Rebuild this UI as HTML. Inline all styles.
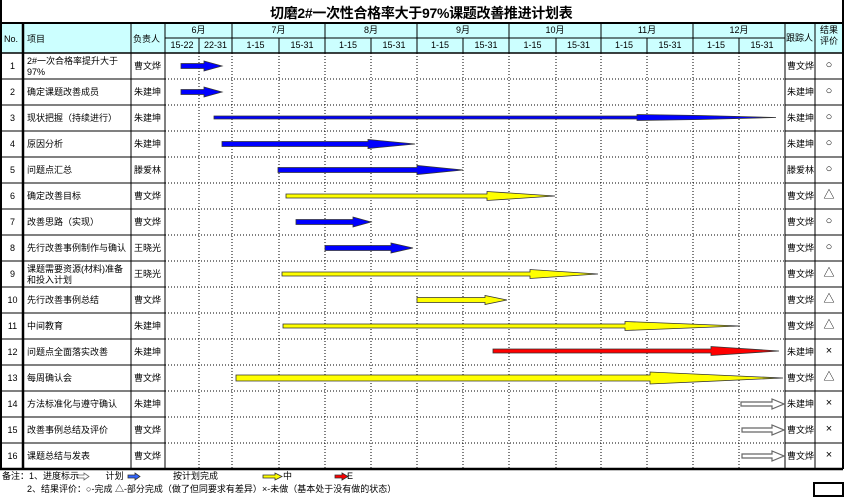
<!DOCTYPE html>
<html><head><meta charset="utf-8"><style>
body{margin:0;background:#fff;width:846px;height:497px;overflow:hidden;position:relative;font-family:"Liberation Sans","Noto Sans CJK SC",sans-serif;}
.t{position:absolute;font-size:9px;line-height:11px;color:#000;white-space:nowrap;}
.c{text-align:center;}
.m{font-size:11px;}
svg{position:absolute;left:0;top:0}
</style></head><body>
<svg width="846" height="497" viewBox="0 0 846 497">
<rect x="2" y="23" width="841" height="30" fill="#ccffff"/>
<g stroke="#000" fill="none">
<line x1="1" y1="0" x2="1" y2="469" stroke-width="2"/>
<line x1="2" y1="23" x2="843" y2="23" stroke-width="2"/>
<line x1="843" y1="0" x2="843" y2="469" stroke-width="2"/>
<line x1="165" y1="38" x2="785" y2="38"/>
<line x1="2" y1="53" x2="843" y2="53" stroke-width="1.5"/>
<line x1="23" y1="23" x2="23" y2="469" stroke-width="2.5"/>
<line x1="131" y1="23" x2="131" y2="469"/>
<line x1="165" y1="23" x2="165" y2="469"/>
<line x1="785" y1="23" x2="785" y2="469"/>
<line x1="815" y1="23" x2="815" y2="469"/>
<path d="M232 23V53M325 23V53M417 23V53M509 23V53M601 23V53M693 23V53M199 38V53M279 38V53M371 38V53M463 38V53M556 38V53M647 38V53M739 38V53"/>
<path stroke-dasharray="1,2" d="M199 53V469M232 53V469M279 53V469M325 53V469M371 53V469M417 53V469M463 53V469M509 53V469M556 53V469M601 53V469M647 53V469M693 53V469M739 53V469
M165 79H785M165 105H785M165 131H785M165 157H785M165 183H785M165 209H785M165 235H785M165 261H785M165 287H785M165 313H785M165 339H785M165 365H785M165 391H785M165 417H785M165 443H785"/>
<path d="M2 79H165M2 105H165M2 131H165M2 157H165M2 183H165M2 209H165M2 235H165M2 261H165M2 287H165M2 313H165M2 339H165M2 365H165M2 391H165M2 417H165M2 443H165
M785 79H843M785 105H843M785 131H843M785 157H843M785 183H843M785 209H843M785 235H843M785 261H843M785 287H843M785 313H843M785 339H843M785 365H843M785 391H843M785 417H843M785 443H843"/>
<line x1="0" y1="469" x2="843" y2="469" stroke-width="2.5"/>
<rect x="814" y="483" width="29" height="13" stroke-width="2"/>
</g>
<g stroke="#333" stroke-width="0.8">
<polygon fill="#0000ff" points="181,63.5 204,63.5 204,61 222,66 204,71 204,68.5 181,68.5"/>
<polygon fill="#0000ff" points="181,89.5 204,89.5 204,87 222,92 204,97 204,94.5 181,94.5"/>
<polygon fill="#0000ff" points="214,116 637,116 637,114.5 700,115.5 776,117.5 700,119.5 637,120.5 637,119 214,119"/>
<polygon fill="#0000ff" points="222,141.5 368,141.5 368,139.5 415,144 368,148.5 368,146.5 222,146.5"/>
<polygon fill="#0000ff" points="278,167.5 417,167.5 417,165.5 463,170 417,174.5 417,172.5 278,172.5"/>
<polygon fill="#ffff00" points="286,194 487,194 487,191.5 555,196 487,200.5 487,198 286,198"/>
<polygon fill="#0000ff" points="296,219.5 353,219.5 353,217 371,222 353,227 353,224.5 296,224.5"/>
<polygon fill="#0000ff" points="325,245.5 391,245.5 391,243 413,248 391,253 391,250.5 325,250.5"/>
<polygon fill="#ffff00" points="282,272 530,272 530,269.5 598,274 530,278.5 530,276 282,276"/>
<polygon fill="#ffff00" points="417,297.5 485,297.5 485,295.5 507,300 485,304.5 485,302.5 417,302.5"/>
<polygon fill="#ffff00" points="283,324 625,324 625,321.5 740,326 625,330.5 625,328 283,328"/>
<polygon fill="#ff0000" points="493,349 711,349 711,346.5 779,351 711,355.5 711,353 493,353"/>
<polygon fill="#ffff00" points="236,375 650,375 650,372 783,378 650,384 650,381 236,381"/>
<polygon fill="#fff" stroke="#666" stroke-width="1.2" points="741,402 772,402 772,399 784,404 772,409 772,406 741,406"/>
<polygon fill="#fff" stroke="#666" stroke-width="1.2" points="742,428 772,428 772,425 784,430 772,435 772,432 742,432"/>
<polygon fill="#fff" stroke="#666" stroke-width="1.2" points="742,454 772,454 772,451 784,456 772,461 772,458 742,458"/>
<polygon fill="#fff" stroke="#666" points="77,475 84,475 84,473 89,476.5 84,480 84,478 77,478"/>
<polygon fill="#3366ff" points="128,475 135,475 135,473 140,476.5 135,480 135,478 128,478"/>
<polygon fill="#ffff00" points="263,475 275,475 275,473 282,476.5 275,480 275,478 263,478"/>
<polygon fill="#ff0000" points="335,475 342,475 342,473 348,476.5 342,480 342,478 335,478"/>
</g>
</svg>
<div class="t" style="left:270px;top:4px;font-size:14px;line-height:18px;font-weight:bold;letter-spacing:-0.3px;">切磨2#一次性合格率大于97%课题改善推进计划表</div>
<div class="t" style="left:4px;top:34px;">No.</div>
<div class="t" style="left:27px;top:34px;">项目</div>
<div class="t" style="left:133px;top:34px;">负责人</div>
<div class="t c" style="left:165px;top:25px;width:67px;">6月</div>
<div class="t c" style="left:232px;top:25px;width:93px;">7月</div>
<div class="t c" style="left:325px;top:25px;width:92px;">8月</div>
<div class="t c" style="left:417px;top:25px;width:92px;">9月</div>
<div class="t c" style="left:509px;top:25px;width:92px;">10月</div>
<div class="t c" style="left:601px;top:25px;width:92px;">11月</div>
<div class="t c" style="left:693px;top:25px;width:92px;">12月</div>
<div class="t c" style="left:165px;top:40px;width:34px;">15-22</div>
<div class="t c" style="left:199px;top:40px;width:33px;">22-31</div>
<div class="t c" style="left:232px;top:40px;width:47px;">1-15</div>
<div class="t c" style="left:279px;top:40px;width:46px;">15-31</div>
<div class="t c" style="left:325px;top:40px;width:46px;">1-15</div>
<div class="t c" style="left:371px;top:40px;width:46px;">15-31</div>
<div class="t c" style="left:417px;top:40px;width:46px;">1-15</div>
<div class="t c" style="left:463px;top:40px;width:46px;">15-31</div>
<div class="t c" style="left:509px;top:40px;width:47px;">1-15</div>
<div class="t c" style="left:556px;top:40px;width:45px;">15-31</div>
<div class="t c" style="left:601px;top:40px;width:46px;">1-15</div>
<div class="t c" style="left:647px;top:40px;width:46px;">15-31</div>
<div class="t c" style="left:693px;top:40px;width:46px;">1-15</div>
<div class="t c" style="left:739px;top:40px;width:46px;">15-31</div>
<div class="t" style="left:786px;top:33px;">跟踪人</div>
<div class="t c" style="left:815px;top:25px;width:28px;">结果<br>评价</div>

<div class="t c" style="left:2px;top:61px;width:21px;">1</div><div class="t" style="left:27px;top:56px;">2#一次合格率提升大于<br>97%</div><div class="t" style="left:134px;top:61px;">曹文烨</div><div class="t" style="left:787px;top:61px;">曹文烨</div><div class="t c m" style="left:815px;top:60px;width:28px;">○</div>
<div class="t c" style="left:2px;top:87px;width:21px;">2</div><div class="t" style="left:27px;top:87px;">确定课题改善成员</div><div class="t" style="left:134px;top:87px;">朱建坤</div><div class="t" style="left:787px;top:87px;">朱建坤</div><div class="t c m" style="left:815px;top:86px;width:28px;">○</div>
<div class="t c" style="left:2px;top:113px;width:21px;">3</div><div class="t" style="left:27px;top:113px;">现状把握（持续进行）</div><div class="t" style="left:134px;top:113px;">朱建坤</div><div class="t" style="left:787px;top:113px;">朱建坤</div><div class="t c m" style="left:815px;top:112px;width:28px;">○</div>
<div class="t c" style="left:2px;top:139px;width:21px;">4</div><div class="t" style="left:27px;top:139px;">原因分析</div><div class="t" style="left:134px;top:139px;">朱建坤</div><div class="t" style="left:787px;top:139px;">朱建坤</div><div class="t c m" style="left:815px;top:138px;width:28px;">○</div>
<div class="t c" style="left:2px;top:165px;width:21px;">5</div><div class="t" style="left:27px;top:165px;">问题点汇总</div><div class="t" style="left:134px;top:165px;">滕爱林</div><div class="t" style="left:787px;top:165px;">滕爱林</div><div class="t c m" style="left:815px;top:164px;width:28px;">○</div>
<div class="t c" style="left:2px;top:191px;width:21px;">6</div><div class="t" style="left:27px;top:191px;">确定改善目标</div><div class="t" style="left:134px;top:191px;">曹文烨</div><div class="t" style="left:787px;top:191px;">曹文烨</div><div class="t c m" style="left:815px;top:190px;width:28px;">△</div>
<div class="t c" style="left:2px;top:217px;width:21px;">7</div><div class="t" style="left:27px;top:217px;">改善思路（实现）</div><div class="t" style="left:134px;top:217px;">曹文烨</div><div class="t" style="left:787px;top:217px;">曹文烨</div><div class="t c m" style="left:815px;top:216px;width:28px;">○</div>
<div class="t c" style="left:2px;top:243px;width:21px;">8</div><div class="t" style="left:27px;top:243px;">先行改善事例制作与确认</div><div class="t" style="left:134px;top:243px;">王晓光</div><div class="t" style="left:787px;top:243px;">曹文烨</div><div class="t c m" style="left:815px;top:242px;width:28px;">○</div>
<div class="t c" style="left:2px;top:269px;width:21px;">9</div><div class="t" style="left:27px;top:264px;">课题需要资源(材料)准备<br>和投入计划</div><div class="t" style="left:134px;top:269px;">王晓光</div><div class="t" style="left:787px;top:269px;">曹文烨</div><div class="t c m" style="left:815px;top:268px;width:28px;">△</div>
<div class="t c" style="left:2px;top:295px;width:21px;">10</div><div class="t" style="left:27px;top:295px;">先行改善事例总结</div><div class="t" style="left:134px;top:295px;">曹文烨</div><div class="t" style="left:787px;top:295px;">曹文烨</div><div class="t c m" style="left:815px;top:294px;width:28px;">△</div>
<div class="t c" style="left:2px;top:321px;width:21px;">11</div><div class="t" style="left:27px;top:321px;">中间教育</div><div class="t" style="left:134px;top:321px;">朱建坤</div><div class="t" style="left:787px;top:321px;">曹文烨</div><div class="t c m" style="left:815px;top:320px;width:28px;">△</div>
<div class="t c" style="left:2px;top:347px;width:21px;">12</div><div class="t" style="left:27px;top:347px;">问题点全面落实改善</div><div class="t" style="left:134px;top:347px;">朱建坤</div><div class="t" style="left:787px;top:347px;">朱建坤</div><div class="t c m" style="left:815px;top:346px;width:28px;">×</div>
<div class="t c" style="left:2px;top:373px;width:21px;">13</div><div class="t" style="left:27px;top:373px;">每周确认会</div><div class="t" style="left:134px;top:373px;">曹文烨</div><div class="t" style="left:787px;top:373px;">曹文烨</div><div class="t c m" style="left:815px;top:372px;width:28px;">△</div>
<div class="t c" style="left:2px;top:399px;width:21px;">14</div><div class="t" style="left:27px;top:399px;">方法标准化与遵守确认</div><div class="t" style="left:134px;top:399px;">朱建坤</div><div class="t" style="left:787px;top:399px;">朱建坤</div><div class="t c m" style="left:815px;top:398px;width:28px;">×</div>
<div class="t c" style="left:2px;top:425px;width:21px;">15</div><div class="t" style="left:27px;top:425px;">改善事例总结及评价</div><div class="t" style="left:134px;top:425px;">曹文烨</div><div class="t" style="left:787px;top:425px;">曹文烨</div><div class="t c m" style="left:815px;top:424px;width:28px;">×</div>
<div class="t c" style="left:2px;top:451px;width:21px;">16</div><div class="t" style="left:27px;top:451px;">课题总结与发表</div><div class="t" style="left:134px;top:451px;">曹文烨</div><div class="t" style="left:787px;top:451px;">曹文烨</div><div class="t c m" style="left:815px;top:450px;width:28px;">×</div>

<div class="t" style="left:2px;top:471px;">备注：1、进度标示 <span style="display:inline-block;width:14px"></span>&nbsp;&nbsp;&nbsp;&nbsp;计划</div>
<div class="t" style="left:173px;top:471px;">按计划完成</div>
<div class="t" style="left:283px;top:471px;">中</div>
<div class="t" style="left:347px;top:471px;">E</div>
<div class="t" style="left:27px;top:484px;">2、结果评价：○-完成 △-部分完成（做了但同要求有差异）×-未做（基本处于没有做的状态）</div>
</body></html>
